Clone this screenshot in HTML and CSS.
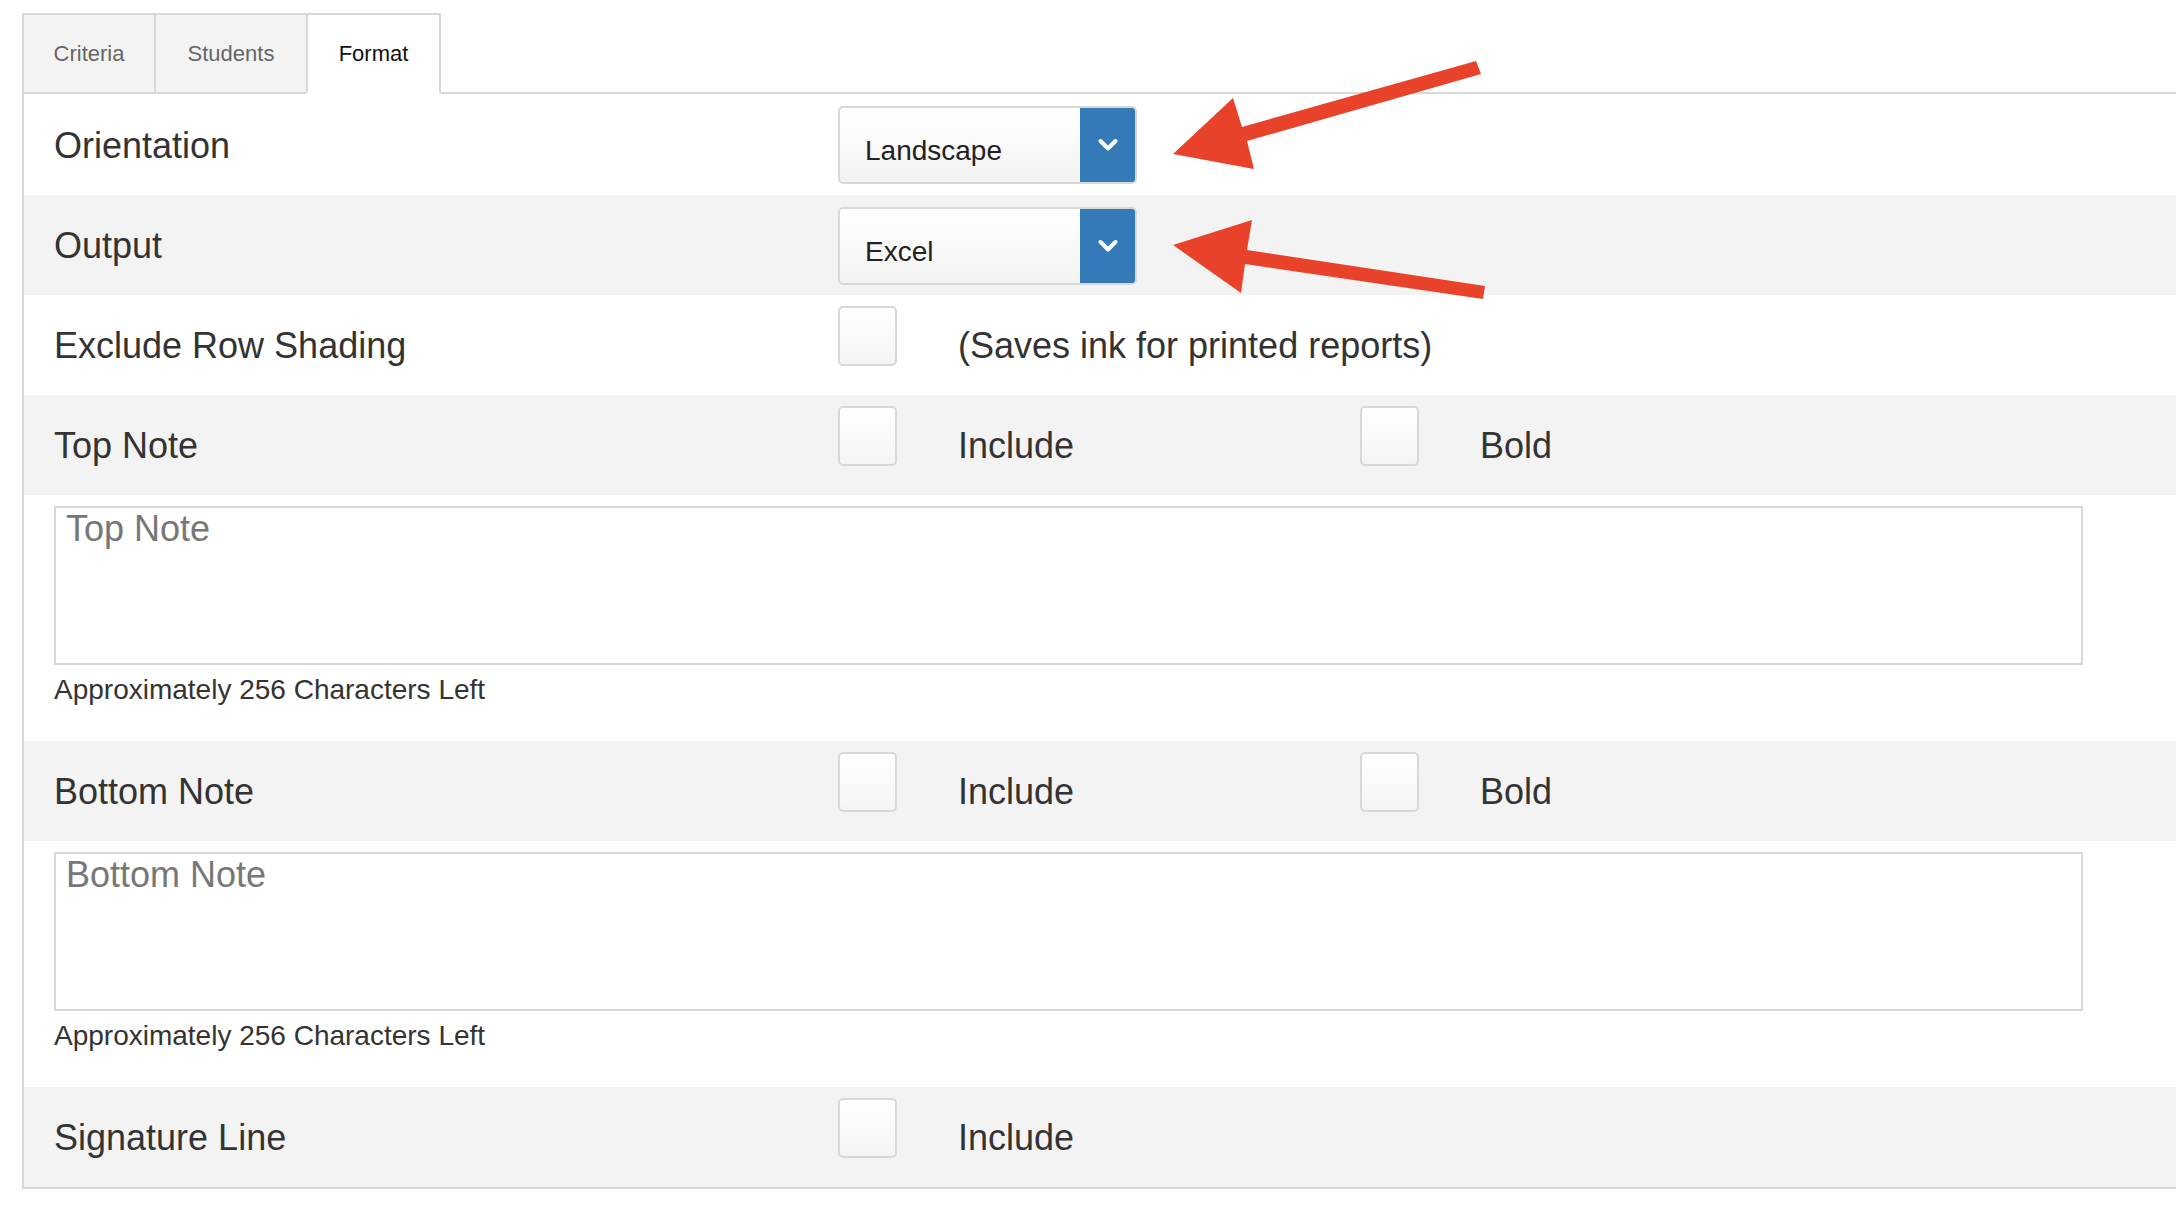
FILE: index.html
```html
<!DOCTYPE html>
<html lang="en">
<head>
<meta charset="utf-8">
<title>Report Format</title>
<link rel="stylesheet" href="styles.css">
</head>
<body>
<div class="page">
  <ul class="tabs">
    <li class="tab tab-criteria">Criteria</li>
    <li class="tab tab-students">Students</li>
    <li class="tab tab-format active">Format</li>
  </ul>
  <div class="panel">
    <div class="row first">
      <div class="label">Orientation</div>
      <div class="select">
        <div class="select-value">Landscape</div>
        <div class="select-btn"><svg width="22" height="16" viewBox="0 0 22 16"><polyline points="3.5,4 11,11.5 18.5,4" fill="none" stroke="#fff" stroke-width="4" stroke-linecap="round" stroke-linejoin="round"/></svg></div>
      </div>
    </div>
    <div class="row alt">
      <div class="label">Output</div>
      <div class="select">
        <div class="select-value">Excel</div>
        <div class="select-btn"><svg width="22" height="16" viewBox="0 0 22 16"><polyline points="3.5,4 11,11.5 18.5,4" fill="none" stroke="#fff" stroke-width="4" stroke-linecap="round" stroke-linejoin="round"/></svg></div>
      </div>
    </div>
    <div class="row">
      <div class="label">Exclude Row Shading</div>
      <div class="opt"><span class="check"></span><span class="opt-text">(Saves ink for printed reports)</span></div>
    </div>
    <div class="row alt">
      <div class="label">Top Note</div>
      <div class="opt"><span class="check"></span><span class="opt-text">Include</span></div>
      <div class="opt"><span class="check"></span><span class="opt-text">Bold</span></div>
    </div>
    <div class="note">
      <textarea class="note-input" placeholder="Top Note"></textarea>
      <div class="help">Approximately 256 Characters Left</div>
    </div>
    <div class="row alt">
      <div class="label">Bottom Note</div>
      <div class="opt"><span class="check"></span><span class="opt-text">Include</span></div>
      <div class="opt"><span class="check"></span><span class="opt-text">Bold</span></div>
    </div>
    <div class="note">
      <textarea class="note-input" placeholder="Bottom Note"></textarea>
      <div class="help">Approximately 256 Characters Left</div>
    </div>
    <div class="row alt">
      <div class="label">Signature Line</div>
      <div class="opt"><span class="check"></span><span class="opt-text">Include</span></div>
    </div>
  </div>
  <svg class="arrows" width="2176" height="1212" viewBox="0 0 2176 1212">
    <polygon fill="#e9422a" points="1173,154 1233,98 1242,127 1476,61 1481,74 1247,141 1254,169"/>
    <polygon fill="#e9422a" points="1173,245 1252,220 1247,250 1485,286 1483,299 1245,264 1241,293"/>
  </svg>
</div>
</body>
</html>
```
FILE: styles.css
```css
html, body {
  margin: 0;
  padding: 0;
  background: #fff;
  overflow: hidden;
}

body {
  font-family: "Liberation Sans", Arial, sans-serif;
  color: #333;
}

.page {
  position: relative;
  width: 2176px;
  height: 1212px;
  padding: 13px 0 0 22px;
  box-sizing: border-box;
}

.tabs {
  list-style: none;
  margin: 0;
  padding: 0;
  display: flex;
  border-bottom: 2px solid #d8d8d8;
}

.tab {
  height: 81px;
  box-sizing: border-box;
  margin-bottom: -2px;
  margin-right: -2px;
  border: 2px solid #d8d8d8;
  background: #f3f3f3;
  color: #666;
  font-size: 22px;
  display: flex;
  align-items: center;
  justify-content: center;
}

.tab-criteria {
  width: 134px;
}

.tab-students {
  width: 154px;
}

.tab-format {
  width: 135px;
}

.tab.active {
  background: #fff;
  color: #111;
  border-bottom-color: #fff;
}

.panel {
  border-left: 2px solid #d8d8d8;
  border-bottom: 2px solid #d8d8d8;
}

.row {
  display: flex;
  align-items: center;
  height: 100px;
  box-sizing: border-box;
  padding-left: 30px;
}

.row.first {
  height: 101px;
}

.row.alt {
  background: #f3f3f3;
}

.label {
  width: 784px;
  flex: none;
  font-size: 36px;
  color: #333;
  padding-top: 2px;
}

.select {
  align-self: flex-start;
  margin-top: 12px;
  width: 299px;
  height: 78px;
  box-sizing: border-box;
  border: 2px solid #d8d8d8;
  border-radius: 5px;
  background: linear-gradient(#ffffff, #f3f3f3);
  display: flex;
}

.select-value {
  flex: 1;
  display: flex;
  align-items: center;
  padding: 11px 0 0 25px;
  font-size: 28px;
  color: #222;
}

.select-btn {
  width: 55px;
  flex: none;
  background: #337ab7;
  border-radius: 0 3px 3px 0;
  display: flex;
  align-items: center;
  justify-content: center;
}

.opt {
  align-self: stretch;
  display: flex;
  align-items: center;
  width: 522px;
  flex: none;
}

.check {
  align-self: flex-start;
  margin-top: 11px;
  width: 59px;
  height: 60px;
  box-sizing: border-box;
  border: 2px solid #d8d8d8;
  border-radius: 5px;
  background: linear-gradient(#ffffff, #f4f4f4);
  flex: none;
}

.opt-text {
  margin-left: 61px;
  font-size: 36px;
  color: #333;
  white-space: nowrap;
  padding-top: 2px;
}

.note {
  padding: 11px 0 31px 30px;
}

.note-input {
  display: block;
  width: 2029px;
  height: 159px;
  box-sizing: border-box;
  margin: 0;
  padding: 0 10px;
  border: 2px solid #d8d8d8;
  border-radius: 0;
  font-family: "Liberation Sans", Arial, sans-serif;
  font-size: 36px;
  color: #333;
  resize: none;
  background: #fff;
}

.note-input::placeholder {
  color: #777;
}

.help {
  margin-top: 5px;
  font-size: 28px;
  line-height: 40px;
  color: #333;
}

.arrows {
  position: absolute;
  top: 0;
  left: 0;
  pointer-events: none;
}
```
